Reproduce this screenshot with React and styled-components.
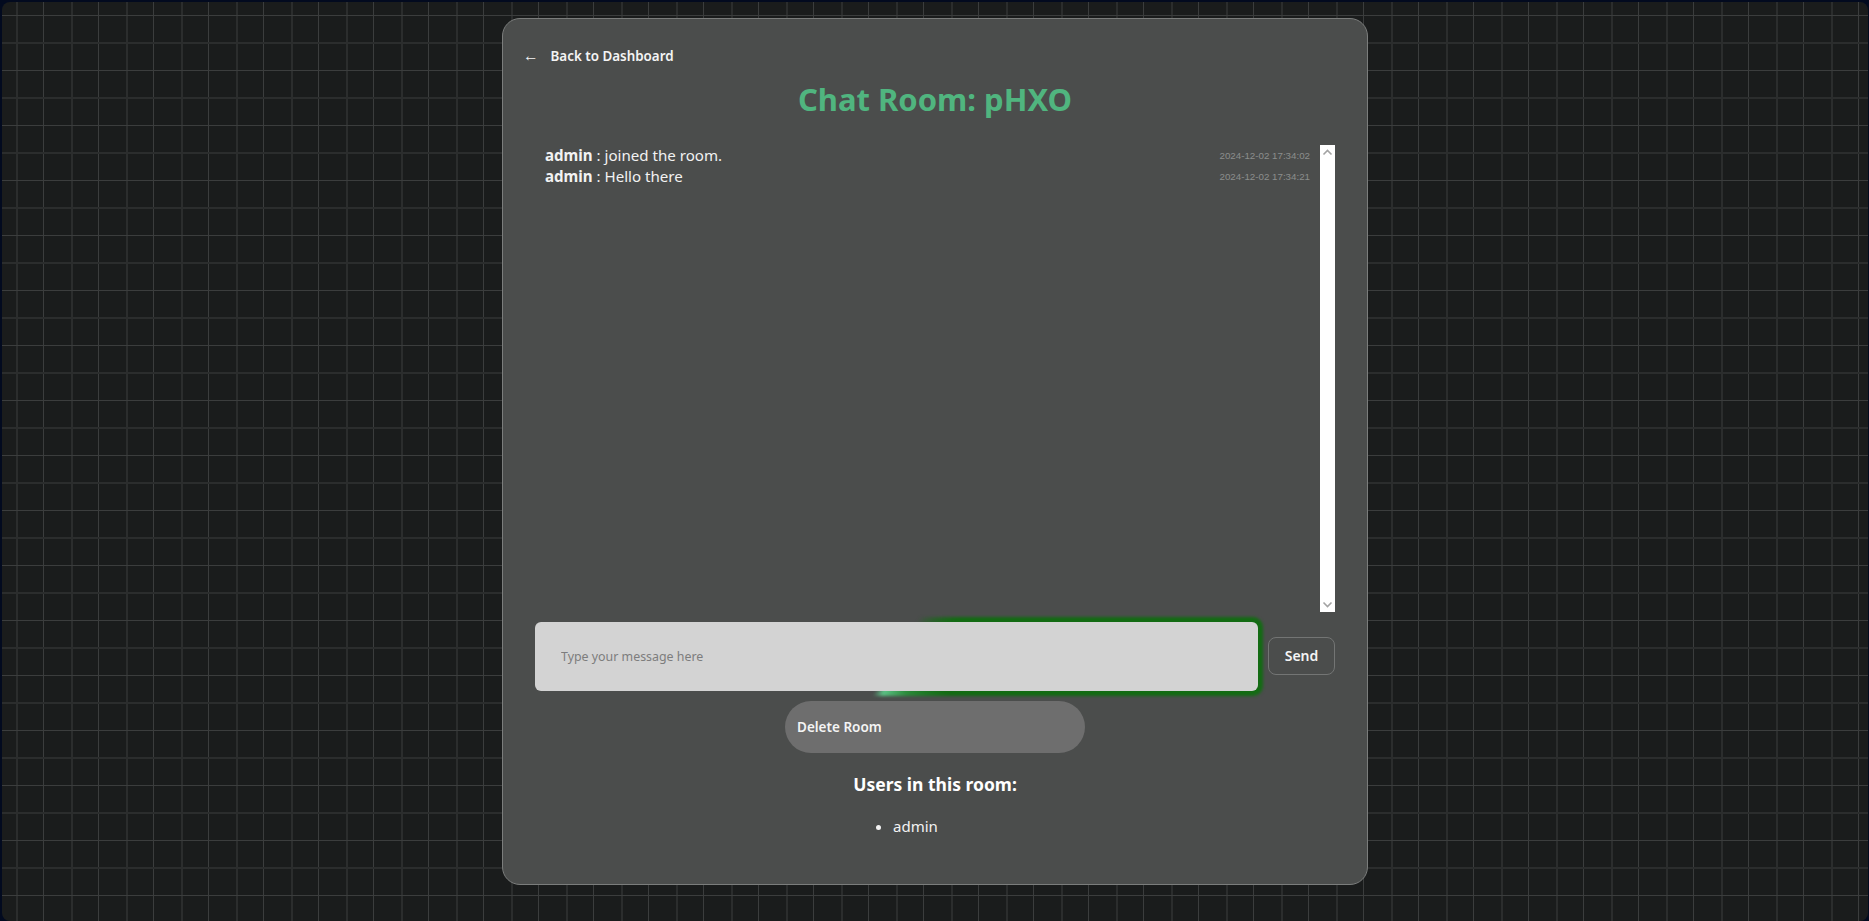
import React from "react";
import styled, { createGlobalStyle } from "styled-components";

const GlobalStyle = createGlobalStyle`
  * {
    box-sizing: border-box;
  }
  html, body {
    margin: 0;
    height: 100%;
    overflow: hidden;
    background: #020a1f;
    font-family: "Noto Sans", "Open Sans", sans-serif;
  }
`;

const messages = [
  { user: "admin", text: "joined the room.", time: "2024-12-02 17:34:02" },
  { user: "admin", text: "Hello there", time: "2024-12-02 17:34:21" },
];

function Chevron({ up }) {
  return (
    <svg width="11" height="7" viewBox="0 0 11 7" fill="none">
      <path
        d={up ? "M1.5 5.5 L5.5 1.5 L9.5 5.5" : "M1.5 1.5 L5.5 5.5 L9.5 1.5"}
        stroke="#a3a3a3"
        strokeWidth="1.6"
      />
    </svg>
  );
}

export default function App() {
  return (
    <Page>
      <GlobalStyle />
      <Card>
        <BackLink href="#">
          <Arrow>←</Arrow>
          Back to Dashboard
        </BackLink>
        <Title>Chat Room: pHXO</Title>
        <ChatBox>
          <MessageList>
            {messages.map((m) => (
              <Message key={m.time}>
                <span>
                  <strong>{m.user}</strong> : {m.text}
                </span>
                <Time>{m.time}</Time>
              </Message>
            ))}
          </MessageList>
          <ScrollTrack>
            <Chevron up />
            <Chevron />
          </ScrollTrack>
        </ChatBox>
        <Composer>
          <InputWrap>
            <Glow />
            <MessageInput placeholder="Type your message here" />
          </InputWrap>
          <SendButton>Send</SendButton>
        </Composer>
        <DeleteButton>Delete Room</DeleteButton>
        <UsersTitle>Users in this room:</UsersTitle>
        <UserList>
          <li>admin</li>
        </UserList>
      </Card>
    </Page>
  );
}

const Page = styled.div`
  margin: 2px 1px 0 2px;
  height: calc(100vh - 2px);
  border-radius: 8px;
  display: flex;
  justify-content: center;
  align-items: flex-start;
  padding-top: 16px;
  background-color: #1a1c1c;
  background-image: linear-gradient(#3b3d3d 1px, transparent 1px),
    linear-gradient(#2b2d2d 2px, transparent 2px),
    linear-gradient(90deg, #3b3d3d 1px, transparent 1px),
    linear-gradient(90deg, #2b2d2d 2px, transparent 2px);
  background-size: 55px 55px;
  background-position: 0 13px, 0 40px, 41px 0, 14px 0;
`;

const Card = styled.div`
  width: 866px;
  height: 867px;
  padding: 0 32px;
  display: flex;
  flex-direction: column;
  background: #4b4d4c;
  border: 1px solid #7b7d7c;
  border-radius: 18px;
  color: #fff;
`;

const BackLink = styled.a`
  display: flex;
  align-items: center;
  height: 20px;
  margin: 27px 0 0 -10px;
  color: #f4f4f4;
  font-size: 13.4px;
  font-weight: 600;
  text-decoration: none;
`;

const Arrow = styled.span`
  width: 27.5px;
  margin-left: -2px;
  font-family: "Liberation Sans", Arial, sans-serif;
  font-size: 15.5px;
  font-weight: 400;
`;

const Title = styled.h1`
  margin: 10px 0 0;
  height: 46px;
  line-height: 46px;
  text-align: center;
  color: #50b57f;
  font-size: 31px;
  font-weight: 700;
`;

const ChatBox = styled.div`
  display: flex;
  height: 467px;
  margin-top: 23px;
`;

const MessageList = styled.div`
  flex: 1;
  padding: 0 10px;
`;

const Message = styled.div`
  display: flex;
  justify-content: space-between;
  align-items: center;
  height: 21px;
  font-size: 15.1px;
  line-height: 21px;
  color: #f2f2f2;

  strong {
    font-weight: 700;
  }
`;

const Time = styled.span`
  font-family: "Liberation Sans", Arial, sans-serif;
  font-size: 9.75px;
  color: #8b8d8c;
`;

const ScrollTrack = styled.div`
  width: 15px;
  padding: 4px 0;
  background: #fff;
  display: flex;
  flex-direction: column;
  align-items: center;
  justify-content: space-between;
`;

const Composer = styled.div`
  display: flex;
  align-items: center;
  gap: 10px;
  margin-top: 10px;
`;

const InputWrap = styled.div`
  position: relative;
  flex: 1;
  height: 69px;
`;

const Glow = styled.div`
  position: absolute;
  inset: -5px;
  border-radius: 10px;
  filter: blur(1.5px);
  background: conic-gradient(
    transparent 30deg,
    #136b13 58deg,
    #136b13 125deg,
    #2c8c3c 165deg,
    #5cc185 200deg,
    transparent 212deg
  );
`;

const MessageInput = styled.input`
  position: relative;
  width: 100%;
  height: 100%;
  padding: 0 26px;
  border: none;
  outline: none;
  border-radius: 6px;
  background: #d3d3d3;
  font-family: inherit;
  font-size: 12.4px;
  color: #333;

  &::placeholder {
    color: #7d7d7d;
  }
`;

const SendButton = styled.button`
  width: 67px;
  height: 38px;
  margin-bottom: 2px;
  border: 1px solid #737574;
  border-radius: 8px;
  background: transparent;
  color: #f4f4f4;
  font-family: inherit;
  font-size: 14px;
  font-weight: 600;
`;

const DeleteButton = styled.button`
  align-self: center;
  width: 300px;
  height: 52px;
  margin-top: 10px;
  padding: 0 12px;
  border: none;
  border-radius: 26px;
  background: #6e6e6e;
  color: #f4f4f4;
  text-align: left;
  font-family: inherit;
  font-size: 13.5px;
  font-weight: 600;
`;

const UsersTitle = styled.h3`
  margin: 19px 0 0;
  text-align: center;
  font-size: 17.5px;
  line-height: 24px;
  font-weight: 700;
`;

const UserList = styled.ul`
  align-self: center;
  margin: 19px 0 0;
  padding: 0 0 0 20px;
  width: 124px;
  font-size: 15px;
  line-height: 22px;
  color: #f2f2f2;
`;
